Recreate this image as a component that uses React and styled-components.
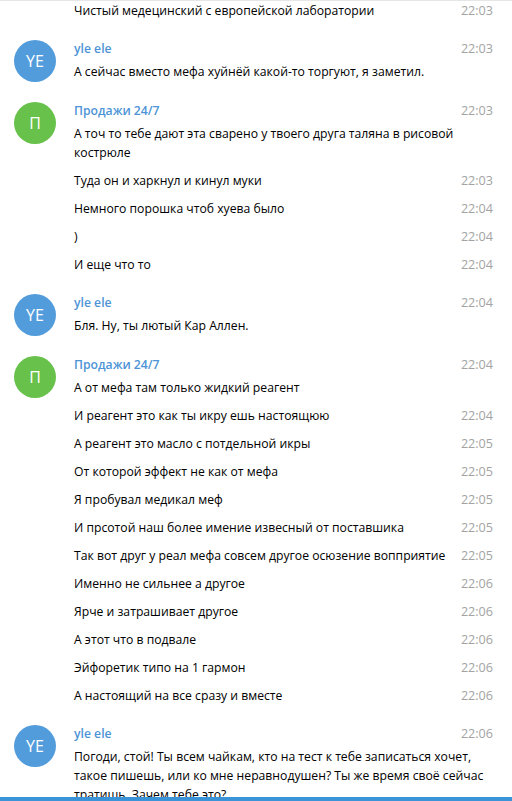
import React from "react";
import styled, { createGlobalStyle } from "styled-components";

const GlobalStyle = createGlobalStyle`
  html, body { margin: 0; padding: 0; background: #ffffff; }
  body { font-family: "Open Sans", "Noto Sans", sans-serif; }
`;

const Screen = styled.div`
  width: 512px;
  height: 801px;
  display: flex;
  flex-direction: column;
  overflow: hidden;
  background: #ffffff;
  border-top: 1px solid #e6e6e6;
  box-sizing: border-box;
`;

const Feed = styled.div`
  flex: 1;
  overflow: hidden;
  min-height: 0;
`;

const BottomBar = styled.div`
  height: 4px;
  flex: none;
  background: #3a93d6;
`;

const Group = styled.div`
  display: grid;
  grid-template-columns: 74px 1fr;
  padding-top: ${(p) => (p.$first ? "0" : "19px")};
`;

const AvatarCol = styled.div`
  padding-left: 14px;
  padding-top: 1px;
`;

const Avatar = styled.div`
  width: 42px;
  height: 42px;
  border-radius: 50%;
  background: ${(p) => p.$color};
  color: #ffffff;
  display: flex;
  align-items: center;
  justify-content: center;
  font-size: 16px;
  font-weight: 400;
`;

const Body = styled.div`
  padding-right: 19px;
  display: flex;
  flex-direction: column;
`;

const Header = styled.div`
  display: flex;
  justify-content: space-between;
  line-height: 19px;
  height: 19px;
  margin-bottom: 4px;
`;

const Name = styled.span`
  font-size: 12.2px;
  font-weight: 600;
  color: #4d94d6;
`;

const Time = styled.span`
  font-size: 12.6px;
  color: #a3a3a3;
  flex: none;
  margin-left: 12px;
`;

const Row = styled.div`
  display: flex;
  justify-content: space-between;
  align-items: flex-start;
  line-height: 19px;
  margin-top: ${(p) => (p.$lead ? "0" : "9px")};
`;

const Text = styled.div`
  font-size: 12.2px;
  color: #000000;
  line-height: 19px;
`;

const groups = [
  {
    first: true,
    messages: [["Чистый медецинский с европейской лаборатории", "22:03"]],
  },
  {
    name: "yle ele",
    initials: "YE",
    color: "#539cdb",
    time: "22:03",
    messages: [["А сейчас вместо мефа хуйнёй какой-то торгуют, я заметил."]],
  },
  {
    name: "Продажи 24/7",
    initials: "П",
    color: "#67c14a",
    time: "22:03",
    messages: [
      ["А точ то тебе дают эта сварено у твоего друга таляна в рисовой кострюле"],
      ["Туда он и харкнул и кинул муки", "22:03"],
      ["Немного порошка чтоб хуева было", "22:04"],
      [")", "22:04"],
      ["И еще что то", "22:04"],
    ],
  },
  {
    name: "yle ele",
    initials: "YE",
    color: "#539cdb",
    time: "22:04",
    messages: [["Бля. Ну, ты лютый Кар Аллен."]],
  },
  {
    name: "Продажи 24/7",
    initials: "П",
    color: "#67c14a",
    time: "22:04",
    messages: [
      ["А от мефа там только жидкий реагент"],
      ["И реагент это как ты икру ешь настоящюю", "22:04"],
      ["А реагент это масло с потдельной икры", "22:05"],
      ["От которой эффект не как от мефа", "22:05"],
      ["Я пробувал медикал меф", "22:05"],
      ["И прсотой наш более имение извесный от поставшика", "22:05"],
      ["Так вот друг у реал мефа совсем другое осюзение вопприятие", "22:05"],
      ["Именно не сильнее а другое", "22:06"],
      ["Ярче и затрашивает другое", "22:06"],
      ["А этот что в подвале", "22:06"],
      ["Эйфоретик типо на 1 гармон", "22:06"],
      ["А настоящий на все сразу и вместе", "22:06"],
    ],
  },
  {
    name: "yle ele",
    initials: "YE",
    color: "#539cdb",
    time: "22:06",
    messages: [
      [
        "Погоди, стой! Ты всем чайкам, кто на тест к тебе записаться хочет, такое пишешь, или ко мне неравнодушен? Ты же время своё сейчас тратишь. Зачем тебе это?",
      ],
    ],
  },
];

export default function App() {
  return (
    <>
      <GlobalStyle />
      <Screen>
        <Feed>
          {groups.map((g, gi) => (
            <Group key={gi} $first={g.first}>
              <AvatarCol>
                {g.initials && <Avatar $color={g.color}>{g.initials}</Avatar>}
              </AvatarCol>
              <Body>
                {g.name && (
                  <Header>
                    <Name>{g.name}</Name>
                    <Time>{g.time}</Time>
                  </Header>
                )}
                {g.messages.map(([text, time], mi) => (
                  <Row key={mi} $lead={mi === 0}>
                    <Text>{text}</Text>
                    {time && <Time>{time}</Time>}
                  </Row>
                ))}
              </Body>
            </Group>
          ))}
        </Feed>
        <BottomBar />
      </Screen>
    </>
  );
}
